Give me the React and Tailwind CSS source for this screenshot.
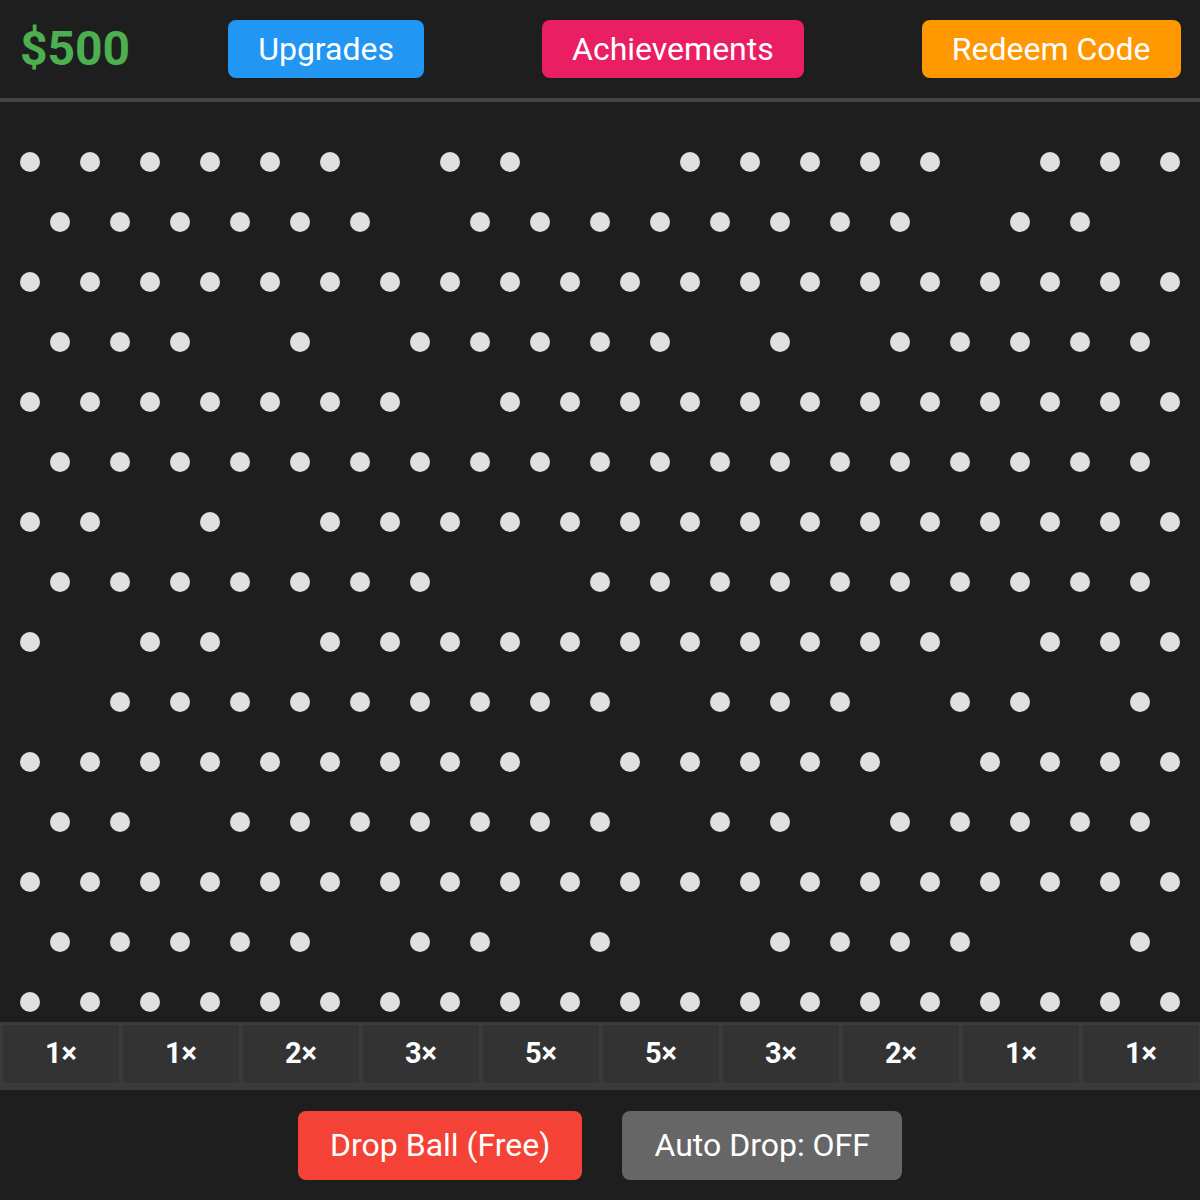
const PEG_ROWS = [
  '11111101100111110111',
  '1111110111111110110',
  '11111111111111111111',
  '1110101111101011111',
  '11111110111111111111',
  '1111111111111111111',
  '11010111111111111111',
  '1111111001111111111',
  '10110111111111110111',
  '0111111111011101101',
  '11111111101111101111',
  '1101111111011011111',
  '11111111111111111111',
  '1111101101001111001',
  '11111111111111111111',
];

const MULTIPLIERS = [1, 1, 2, 3, 5, 5, 3, 2, 1, 1];

const HEADER_BUTTONS = [
  { label: 'Upgrades', color: 'bg-[#2196f3]', gap: 'ml-[98px]' },
  { label: 'Achievements', color: 'bg-[#e91e63]', gap: 'ml-[118px]' },
  { label: 'Redeem Code', color: 'bg-[#ff9800]', gap: 'ml-[118px]' },
];

export default function App() {
  return (
    <div
      className="w-[1200px] h-[1200px] bg-[#1e1e1e] text-white overflow-hidden flex flex-col"
      style={{ fontFamily: 'Roboto, "Noto Sans", sans-serif' }}
    >
      {/* Header */}
      <div className="h-[102px] flex items-center px-[20px] border-b-4 border-[#444]">
        <span className="text-[48px] leading-none font-bold text-[#4caf50] shrink-0">$500</span>
        {HEADER_BUTTONS.map((b) => (
          <button
            key={b.label}
            className={`${b.gap} ${b.color} shrink-0 whitespace-nowrap h-[58px] px-[30px] rounded-lg text-[32px] leading-none text-white`}
          >
            {b.label}
          </button>
        ))}
      </div>

      {/* Peg board */}
      <div className="h-[920px] flex flex-col gap-[40px] pt-[50px]">
        {PEG_ROWS.map((row, r) => (
          <div
            key={r}
            className={`flex gap-[40px] h-[20px] shrink-0 ${r % 2 === 0 ? 'pl-[20px]' : 'pl-[50px]'}`}
          >
            {row.split('').map((p, i) => (
              <div
                key={i}
                className={`w-[20px] h-[20px] shrink-0 rounded-full ${p === '1' ? 'bg-[#e0e0e0]' : 'bg-transparent'}`}
              />
            ))}
          </div>
        ))}
      </div>

      {/* Multipliers */}
      <div className="bg-[#3a3a3a] pt-[2px] pb-[6px] grid grid-cols-10">
        {MULTIPLIERS.map((m, i) => (
          <div
            key={i}
            className="ml-[2px] h-[60px] bg-[#333] border border-[#3c3c3c] flex items-center justify-center text-[29px] font-bold"
          >
            {m}×
          </div>
        ))}
      </div>

      {/* Controls */}
      <div className="flex-1 flex items-center justify-center gap-[40px]">
        <button className="h-[69px] px-[32px] rounded-lg bg-[#f44336] text-[32px] leading-none text-white whitespace-nowrap">
          Drop Ball (Free)
        </button>
        <button className="h-[69px] px-[32px] rounded-lg bg-[#666] text-[32px] leading-none text-white whitespace-nowrap">
          Auto Drop: OFF
        </button>
      </div>
    </div>
  );
}
